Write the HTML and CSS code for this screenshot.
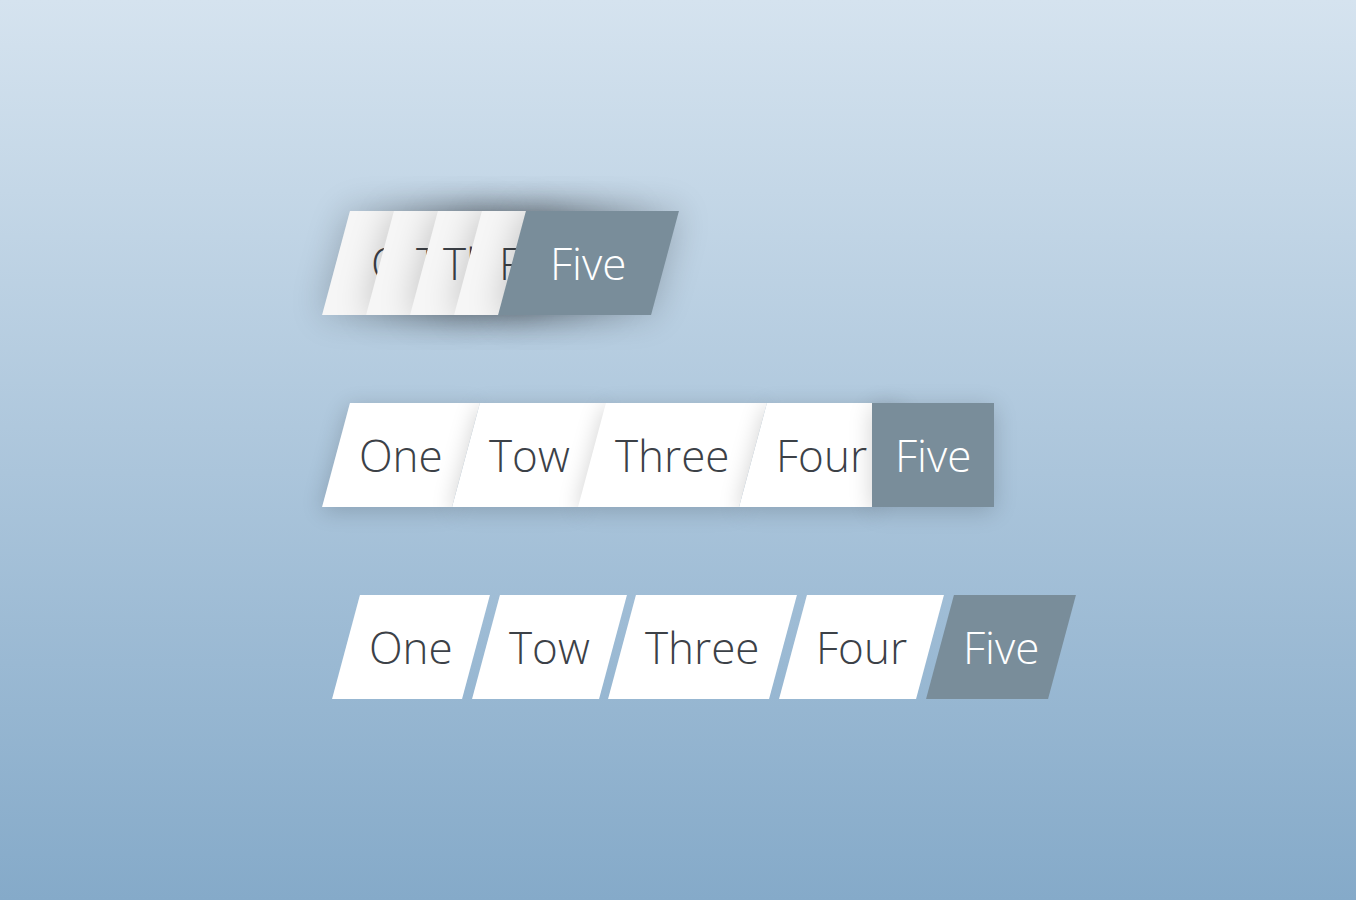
FILE: index.html
```html
<!DOCTYPE html>
<html lang="en">
<head>
  <meta charset="UTF-8" />
  <title>Skewed Tabs</title>
  <meta name="viewport" content="width=device-width, initial-scale=1" />
  <link rel="stylesheet" href="styles.css">
</head>
<body>
  <div class="stage">
    <!-- collapsed: tabs stacked on top of each other -->
    <nav class="tabs tabs-stack">
      <a class="tab" href="#"><span>One</span></a>
      <a class="tab" href="#"><span>Tow</span></a>
      <a class="tab" href="#"><span>Three</span></a>
      <a class="tab" href="#"><span>Four</span></a>
      <a class="tab active" href="#"><span>Five</span></a>
    </nav>

    <!-- joined: tabs side by side, current one straightened -->
    <nav class="tabs tabs-flat">
      <a class="tab" href="#"><span>One</span></a>
      <a class="tab" href="#"><span>Tow</span></a>
      <a class="tab" href="#"><span>Three</span></a>
      <a class="tab" href="#"><span>Four</span></a>
      <a class="tab active" href="#"><span>Five</span></a>
    </nav>

    <!-- spaced: tabs with gaps between -->
    <nav class="tabs tabs-gap">
      <a class="tab" href="#"><span>One</span></a>
      <a class="tab" href="#"><span>Tow</span></a>
      <a class="tab" href="#"><span>Three</span></a>
      <a class="tab" href="#"><span>Four</span></a>
      <a class="tab active" href="#"><span>Five</span></a>
    </nav>
  </div>
</body>
</html>
```

FILE: styles.css
```css
html { min-height: 100%; background: linear-gradient(#d5e3ef, #85aac9); }
body { margin: 0; font-family: 'Open Sans', 'Liberation Sans', sans-serif; font-weight: 300; }
.stage { display: flex; flex-direction: column; align-items: flex-start; gap: 88px; padding: 211px 0 0 336px; }

.tabs { display: flex; height: 104px; }
.tab { box-sizing: border-box; display: flex; align-items: center; justify-content: center; height: 104px; padding: 0 23px; background: #fff; color: #3c4147; font-size: 44px; text-decoration: none; transform: skewX(-15deg); }
.tab span { display: block; transform: skewX(15deg); }
.tab.active { background: #798d9a; color: #fff; }

/* stacked */
.tabs-stack .tab { width: 153px; padding: 0; margin-right: -109px; background: #f6f6f6; box-shadow: 0 0 35px rgba(0,0,0,0.22); }
.tabs-stack .tab.active { margin-right: 0; background: #798d9a; }

/* joined */
.tabs-flat .tab { box-shadow: 0 4px 22px rgba(0,0,0,0.18); }
.tabs-flat .tab.active { transform: skewX(0); margin-left: -18px; }
.tabs-flat .tab.active span { transform: none; }

/* spaced */
.tabs-gap .tab { margin-left: 10px; }
```
